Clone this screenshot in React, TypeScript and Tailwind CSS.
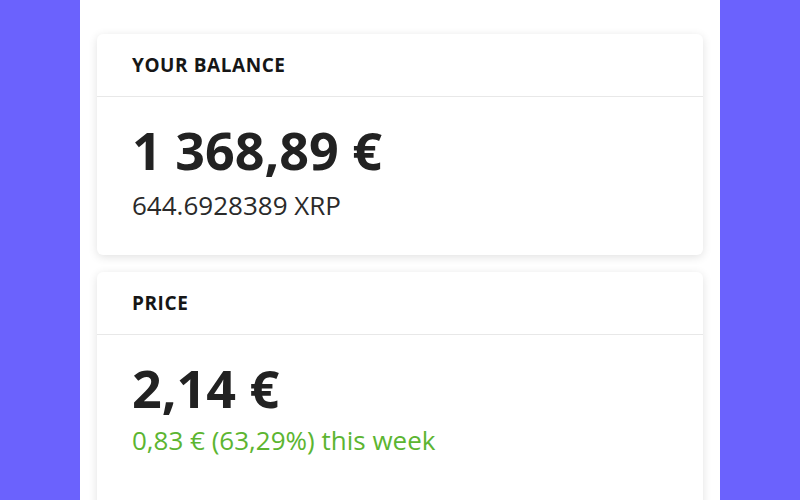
export default function App() {
  return (
    <div className="h-[500px] w-full overflow-hidden bg-[#6b62fd] font-['Open_Sans',sans-serif]">
      <div className="mx-auto flex h-full w-[640px] flex-col gap-[17px] bg-white px-[17px] pt-[34px]">
        <div className="rounded-[6px] bg-white shadow-[0_2px_10px_rgba(0,0,0,0.12)]">
          <div className="flex h-[63px] items-center border-b border-[#e8e8e8] px-[35px]">
            <span className="text-[19px] font-bold tracking-[0.03em] text-[#161616]">YOUR BALANCE</span>
          </div>
          <div className="px-[35px] pb-[33px] pt-[23px]">
            <div className="text-[52px] font-bold leading-[60px] text-[#222]">1 368,89 €</div>
            <div className="mt-[8px] text-[26px] leading-[34px] text-[#2a2a2a]">644.6928389 XRP</div>
          </div>
        </div>
        <div className="shrink-0 rounded-[6px] bg-white shadow-[0_2px_10px_rgba(0,0,0,0.12)]">
          <div className="flex h-[63px] items-center border-b border-[#e8e8e8] px-[35px]">
            <span className="text-[19px] font-bold tracking-[0.03em] text-[#161616]">PRICE</span>
          </div>
          <div className="px-[35px] pb-[60px] pt-[23px]">
            <div className="text-[52px] font-bold leading-[60px] text-[#222]">2,14 €</div>
            <div className="mt-[5px] text-[26px] leading-[34px] text-[#5cb531]">0,83 € (63,29%) this week</div>
          </div>
        </div>
      </div>
    </div>
  );
}
